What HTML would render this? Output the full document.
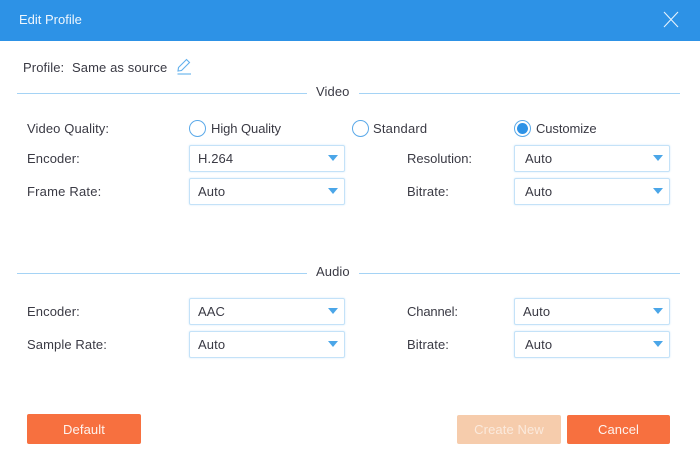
<!DOCTYPE html>
<html><head><meta charset="utf-8"><style>
html,body{margin:0;padding:0;background:#fff}
body{width:700px;height:465px;position:relative;overflow:hidden;font-family:"Liberation Sans",sans-serif;font-size:13px;color:#3a3a44;letter-spacing:.1px}
.t{position:absolute;line-height:16px;white-space:nowrap}
.l{position:absolute;height:1px;background:#a5d3f5}
.s{position:absolute;box-sizing:border-box;width:156px;height:27px;border:1px solid #c4e2f8;border-radius:2px;box-shadow:0 0 2px #d5eafa;background:#fff;line-height:25px;padding-left:8px}
.s.x{padding-left:10px}
.s:after{content:"";position:absolute;right:6px;top:9px;border-left:5.5px solid transparent;border-right:5.5px solid transparent;border-top:6.5px solid #4ba6e8}
.r{position:absolute;box-sizing:border-box;width:17px;height:17px;border:1.5px solid #5aa9e9;border-radius:50%;background:#fff}
.b{position:absolute;box-sizing:border-box;height:29px;background:#f7703f;border-radius:2px;color:#fdf3ee;text-align:center;line-height:30px}
</style></head><body>
<div style="position:absolute;left:0;top:0;width:700px;height:41px;background:#2d92e6"></div>
<div class="t" style="left:19px;top:12px;color:#eef6fd;letter-spacing:0">Edit Profile</div>
<svg style="position:absolute;left:660px;top:9px" width="22" height="22"><path d="M4 3L18 18M18 3L4 18" stroke="#e6f2fc" stroke-width="1.1" fill="none"/></svg>
<div class="t" style="left:23px;top:60px">Profile:</div>
<div class="t" style="left:72px;top:60px">Same as source</div>
<svg style="position:absolute;left:175px;top:57px" width="18" height="19" fill="none" stroke="#62b0ec" stroke-width="1.1"><path d="M3 14L3.5 10.5L11.5 2.5L14.5 5.5L6.5 13.5Z"/><path d="M2.5 17H16"/></svg>

<div class="l" style="left:17px;top:93px;width:290px"></div>
<div class="t" style="left:316px;top:84px">Video</div>
<div class="l" style="left:359px;top:93px;width:321px"></div>

<div class="t" style="left:27px;top:121px">Video Quality:</div>
<div class="r" style="left:189px;top:120px"></div>
<div class="t" style="left:211px;top:121px;letter-spacing:-.07px">High Quality</div>
<div class="r" style="left:352px;top:120px"></div>
<div class="t" style="left:373px;top:121px;letter-spacing:.2px">Standard</div>
<div class="r" style="left:514px;top:120px"></div>
<div style="position:absolute;left:517px;top:123px;width:11px;height:11px;border-radius:50%;background:#2d92e6"></div>
<div class="t" style="left:536px;top:121px;letter-spacing:-.1px">Customize</div>

<div class="t" style="left:27px;top:151px">Encoder:</div>
<div class="s" style="left:189px;top:145px">H.264</div>
<div class="t" style="left:407px;top:151px;letter-spacing:0">Resolution:</div>
<div class="s x" style="left:514px;top:145px">Auto</div>
<div class="t" style="left:27px;top:184px;letter-spacing:.2px">Frame Rate:</div>
<div class="s" style="left:189px;top:178px">Auto</div>
<div class="t" style="left:407px;top:184px">Bitrate:</div>
<div class="s x" style="left:514px;top:178px">Auto</div>

<div class="l" style="left:17px;top:273px;width:290px"></div>
<div class="t" style="left:316px;top:264px">Audio</div>
<div class="l" style="left:359px;top:273px;width:321px"></div>

<div class="t" style="left:27px;top:304px">Encoder:</div>
<div class="s" style="left:189px;top:298px">AAC</div>
<div class="t" style="left:407px;top:304px;letter-spacing:-.15px">Channel:</div>
<div class="s" style="left:514px;top:298px">Auto</div>
<div class="t" style="left:27px;top:337px">Sample Rate:</div>
<div class="s" style="left:189px;top:331px">Auto</div>
<div class="t" style="left:407px;top:337px">Bitrate:</div>
<div class="s x" style="left:514px;top:331px">Auto</div>

<div class="b" style="left:27px;top:414px;width:114px;height:30px;line-height:31px">Default</div>
<div class="b" style="left:457px;top:415px;width:104px;background:#f6ccac;color:#fbeadd">Create New</div>
<div class="b" style="left:567px;top:415px;width:103px">Cancel</div>
</body></html>
